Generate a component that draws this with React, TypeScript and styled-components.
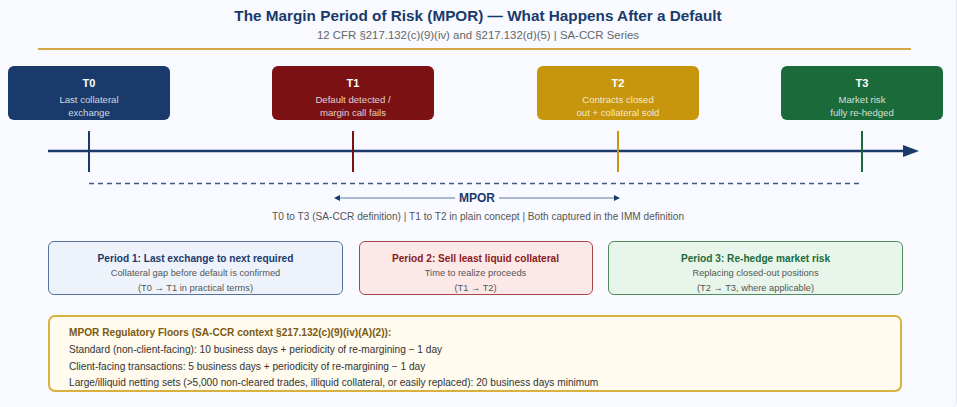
import React from 'react'
import styled, { createGlobalStyle } from 'styled-components'

const GlobalStyle = createGlobalStyle`
  html, body {
    margin: 0;
    padding: 0;
    background: #f8faff;
  }
  body {
    font-family: "Liberation Sans", Arial, sans-serif;
  }
`

const Page = styled.div`
  width: 957px;
  height: 407px;
  box-sizing: border-box;
  overflow: hidden;
  background: #f8faff;
  border-right: 1px solid #e3e7f0;
  border-bottom-right-radius: 6px;
`

const Header = styled.header`
  display: flex;
  flex-direction: column;
  align-items: center;
  padding-top: 6px;
`

const Title = styled.h1`
  margin: 0;
  font-size: 15.3px;
  line-height: 20px;
  font-weight: 700;
  color: #1a3a6b;
`

const Subtitle = styled.div`
  margin-top: 2px;
  font-size: 11.4px;
  line-height: 14px;
  color: #666;
`

const Rule = styled.div`
  margin: 6px 45px 0 38px;
  height: 2px;
  background: #d4a843;
`

const EventRow = styled.div`
  display: flex;
  margin-top: 16px;
`

const EventBox = styled.div<{ $bg: string; $offset: number }>`
  margin-left: ${(p) => p.$offset}px;
  width: 162px;
  height: 54px;
  box-sizing: border-box;
  padding-top: 10px;
  border-radius: 6px;
  background: ${(p) => p.$bg};
  display: flex;
  flex-direction: column;
  align-items: center;
  color: #fff;
  text-align: center;
`

const EventTitle = styled.div`
  font-size: 11px;
  line-height: 14px;
  font-weight: 700;
`

const EventText = styled.div`
  margin-top: 3px;
  font-size: 9.6px;
  line-height: 13px;
  color: rgba(255, 255, 255, 0.8);
`

const Timeline = styled.svg`
  display: block;
  width: 957px;
  height: 70px;
`

const SpanRow = styled.div`
  margin-top: 1px;
  display: flex;
  align-items: center;
  justify-content: center;
  gap: 4px;
  padding-right: 2px;
  height: 14px;
`

const SpanLabel = styled.span`
  font-size: 12px;
  line-height: 14px;
  font-weight: 700;
  color: #1a3a6b;
`

const Caption = styled.div`
  margin-top: 5px;
  text-align: center;
  font-size: 10.12px;
  line-height: 14px;
  color: #555;
`

const PeriodGrid = styled.div`
  margin: 17px 54px 0 48px;
  display: grid;
  grid-template-columns: 295px 234px 295px;
  column-gap: 15.5px;
`

const PeriodBox = styled.div<{ $bg: string; $border: string }>`
  height: 54px;
  box-sizing: border-box;
  padding-top: 10px;
  border: 1.5px solid ${(p) => p.$border};
  border-radius: 6px;
  background: ${(p) => p.$bg};
  text-align: center;
`

const PeriodTitle = styled.div<{ $color: string }>`
  font-size: 10.15px;
  line-height: 14px;
  font-weight: 700;
  color: ${(p) => p.$color};
`

const PeriodText = styled.div`
  font-size: 9.3px;
  line-height: 14.5px;
  color: #555;
`

const Floors = styled.div`
  margin: 20px 54px 0 48px;
  height: 77px;
  box-sizing: border-box;
  padding: 9px 20px 0 19px;
  border: 2px solid #d9b13f;
  border-radius: 7px;
  background: #fffbee;
`

const FloorsTitle = styled.div`
  font-size: 10.15px;
  line-height: 14px;
  font-weight: 700;
  color: #7a5a10;
  margin-bottom: 2px;
`

const FloorsLine = styled.div`
  font-size: 10.15px;
  line-height: 16.5px;
  color: #333;
  white-space: nowrap;
`

const Arrow = ({ dir }: { dir: 'left' | 'right' }) => (
  <svg width="121" height="8" viewBox="0 0 121 8">
    {dir === 'left' ? (
      <>
        <polygon points="0,4 6,1 6,7" fill="#1a3a6b" />
        <line x1="6" y1="4" x2="121" y2="4" stroke="#5b78a6" strokeWidth="1.2" />
      </>
    ) : (
      <>
        <line x1="0" y1="4" x2="115" y2="4" stroke="#5b78a6" strokeWidth="1.2" />
        <polygon points="121,4 115,1 115,7" fill="#1a3a6b" />
      </>
    )}
  </svg>
)

const events = [
  { id: 'T0', bg: '#1a3a6b', offset: 8, lines: ['Last collateral', 'exchange'] },
  { id: 'T1', bg: '#7b1113', offset: 102, lines: ['Default detected /', 'margin call fails'] },
  { id: 'T2', bg: '#c8960c', offset: 103, lines: ['Contracts closed', 'out + collateral sold'] },
  { id: 'T3', bg: '#1b6b3a', offset: 82, lines: ['Market risk', 'fully re-hedged'] },
]

const ticks = [
  { x: 89, color: '#1a3a6b' },
  { x: 353, color: '#7b1113' },
  { x: 618, color: '#c8960c' },
  { x: 862, color: '#1b6b3a' },
]

const periods = [
  {
    title: 'Period 1: Last exchange to next required',
    color: '#1a3a6b',
    bg: '#eef3fb',
    border: '#5572a0',
    lines: ['Collateral gap before default is confirmed', '(T0 → T1 in practical terms)'],
  },
  {
    title: 'Period 2: Sell least liquid collateral',
    color: '#8b1a1a',
    bg: '#fde8e8',
    border: '#a8474a',
    lines: ['Time to realize proceeds', '(T1 → T2)'],
  },
  {
    title: 'Period 3: Re-hedge market risk',
    color: '#1b6b3a',
    bg: '#e8f5ea',
    border: '#4f8a60',
    lines: ['Replacing closed-out positions', '(T2 → T3, where applicable)'],
  },
]

const floors = [
  'Standard (non-client-facing): 10 business days + periodicity of re-margining − 1 day',
  'Client-facing transactions: 5 business days + periodicity of re-margining − 1 day',
  'Large/illiquid netting sets (>5,000 non-cleared trades, illiquid collateral, or easily replaced): 20 business days minimum',
]

export default function App() {
  return (
    <Page>
      <GlobalStyle />
      <Header>
        <Title>The Margin Period of Risk (MPOR) — What Happens After a Default</Title>
        <Subtitle>12 CFR §217.132(c)(9)(iv) and §217.132(d)(5) | SA-CCR Series</Subtitle>
      </Header>
      <Rule />

      <EventRow>
        {events.map((e) => (
          <EventBox key={e.id} $bg={e.bg} $offset={e.offset}>
            <EventTitle>{e.id}</EventTitle>
            <EventText>
              {e.lines[0]}
              <br />
              {e.lines[1]}
            </EventText>
          </EventBox>
        ))}
      </EventRow>

      <Timeline viewBox="0 0 957 70">
        <line x1="48" y1="31" x2="906" y2="31" stroke="#1a3a6b" strokeWidth="2.5" />
        <polygon points="903,25 919,31 903,37" fill="#1a3a6b" />
        {ticks.map((t) => (
          <line key={t.x} x1={t.x} y1="11" x2={t.x} y2="52" stroke={t.color} strokeWidth="2" />
        ))}
        <line
          x1="89"
          y1="63.5"
          x2="860"
          y2="63.5"
          stroke="#3d5a88"
          strokeWidth="1.5"
          strokeDasharray="5 4"
        />
      </Timeline>

      <SpanRow>
        <Arrow dir="left" />
        <SpanLabel>MPOR</SpanLabel>
        <Arrow dir="right" />
      </SpanRow>
      <Caption>T0 to T3 (SA-CCR definition) | T1 to T2 in plain concept | Both captured in the IMM definition</Caption>

      <PeriodGrid>
        {periods.map((p) => (
          <PeriodBox key={p.title} $bg={p.bg} $border={p.border}>
            <PeriodTitle $color={p.color}>{p.title}</PeriodTitle>
            {p.lines.map((l) => (
              <PeriodText key={l}>{l}</PeriodText>
            ))}
          </PeriodBox>
        ))}
      </PeriodGrid>

      <Floors>
        <FloorsTitle>MPOR Regulatory Floors (SA-CCR context §217.132(c)(9)(iv)(A)(2)):</FloorsTitle>
        {floors.map((f) => (
          <FloorsLine key={f}>{f}</FloorsLine>
        ))}
      </Floors>
    </Page>
  )
}
